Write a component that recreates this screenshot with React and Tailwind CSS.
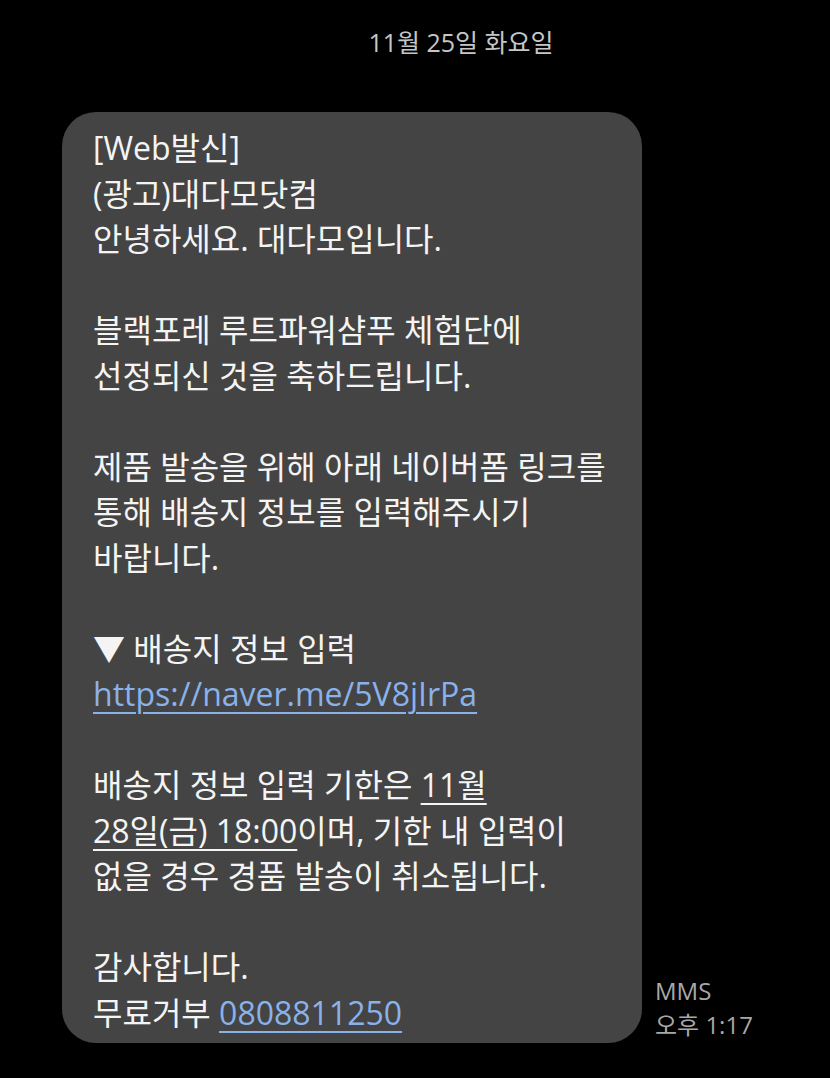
const lines = [
  '[Web발신]',
  '(광고)대다모닷컴',
  '안녕하세요. 대다모입니다.',
  '',
  '블랙포레 루트파워샴푸 체험단에',
  '선정되신 것을 축하드립니다.',
  '',
  '제품 발송을 위해 아래 네이버폼 링크를',
  '통해 배송지 정보를 입력해주시기',
  '바랍니다.',
  '',
  '▼ 배송지 정보 입력',
];

const Line = ({ children }) => (
  <div className="whitespace-pre h-[45.5px]">{children}</div>
);

const App = () => {
  return (
    <div
      className="min-h-screen bg-black text-[#f4f4f4]"
      style={{ fontFamily: '"Open Sans", "Noto Sans CJK KR", sans-serif' }}
    >
      {/* date header */}
      <div className="flex justify-center pl-[92px] pt-[25px]">
        <span className="text-[25px] leading-[34px] text-[#c6c6c6]">11월 25일 화요일</span>
      </div>

      <div className="flex items-end pl-[62px] mt-[53px]">
        {/* message bubble */}
        <div className="w-[580px] rounded-[34px] bg-[#444444] pl-[31px] pr-2 pt-[13px] pb-[8px] text-[32px] leading-[45.5px]">
          {lines.map((l, i) => (
            <Line key={i}>{l}</Line>
          ))}
          <Line>
            <span className="text-[#8ab2ea] underline decoration-2 underline-offset-[6px]">
              https://naver.me/5V8jIrPa
            </span>
          </Line>
          <Line />
          <Line>
            배송지 정보 입력 기한은{' '}
            <span className="underline decoration-2 underline-offset-[6px]">11월</span>
          </Line>
          <Line>
            <span className="underline decoration-2 underline-offset-[6px]">28일(금) 18:00</span>
            이며, 기한 내 입력이
          </Line>
          <Line>없을 경우 경품 발송이 취소됩니다.</Line>
          <Line />
          <Line>감사합니다.</Line>
          <Line>
            무료거부{' '}
            <span className="text-[#8ab2ea] underline decoration-2 underline-offset-[6px]">
              0808811250
            </span>
          </Line>
        </div>

        {/* meta */}
        <div className="ml-[13px] pb-[1px] text-[24px] leading-[34px] text-[#a8a8a8]">
          <div>MMS</div>
          <div>오후 1:17</div>
        </div>
      </div>
    </div>
  );
};

export default App;
